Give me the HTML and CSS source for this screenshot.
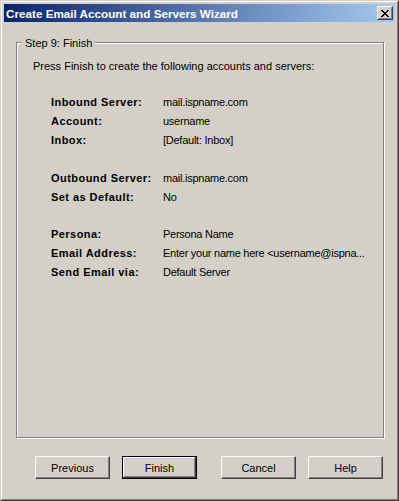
FILE: index.html
```html
<!DOCTYPE html>
<html lang="en">
<head>
    <meta charset="UTF-8">
    <title>Create Email Account and Servers Wizard</title>
    <link rel="stylesheet" href="styles.css">
</head>
<body>
    <div class="window">
        <div class="frame">
            <div class="titlebar">
                <span class="title">Create Email Account and Servers Wizard</span>
                <button type="button" class="close-btn" aria-label="Close">
                    <svg width="8" height="7" viewBox="0 0 8 7" shape-rendering="crispEdges">
                        <path fill="#000" d="M0 0h2v1h-2z M6 0h2v1h-2z M1 1h2v1h-2z M5 1h2v1h-2z M2 2h4v1h-4z M3 3h2v1h-2z M2 4h4v1h-4z M1 5h2v1h-2z M5 5h2v1h-2z M0 6h2v1h-2z M6 6h2v1h-2z"/>
                    </svg>
                </button>
            </div>
            <div class="content">
                <fieldset class="group">
                    <legend>Step 9: Finish</legend>
                    <p class="intro">Press Finish to create the following accounts and servers:</p>
                    <div class="summary">
                        <dl class="section">
                            <div class="row"><dt>Inbound Server:</dt><dd>mail.ispname.com</dd></div>
                            <div class="row"><dt>Account:</dt><dd>username</dd></div>
                            <div class="row"><dt>Inbox:</dt><dd>[Default: Inbox]</dd></div>
                        </dl>
                        <dl class="section">
                            <div class="row"><dt>Outbound Server:</dt><dd>mail.ispname.com</dd></div>
                            <div class="row"><dt>Set as Default:</dt><dd>No</dd></div>
                        </dl>
                        <dl class="section">
                            <div class="row"><dt>Persona:</dt><dd>Persona Name</dd></div>
                            <div class="row"><dt>Email Address:</dt><dd>Enter your name here &lt;username@ispna...</dd></div>
                            <div class="row"><dt>Send Email via:</dt><dd>Default Server</dd></div>
                        </dl>
                    </div>
                </fieldset>
                <div class="buttons">
                    <button type="button" class="btn">Previous</button>
                    <button type="button" class="btn btn-default">Finish</button>
                    <button type="button" class="btn btn-wide-gap">Cancel</button>
                    <button type="button" class="btn">Help</button>
                </div>
            </div>
        </div>
    </div>
</body>
</html>
```

FILE: styles.css
```css
body {
    margin: 0;
    font-family: "Liberation Sans", Arial, sans-serif;
    font-size: 11px;
    color: #000;
    background: #d4d0c8;
}
.window {
    width: 399px;
    height: 501px;
    box-sizing: border-box;
    border: 1px solid;
    border-color: #d4d0c8 #404040 #404040 #d4d0c8;
}
.frame {
    height: 100%;
    box-sizing: border-box;
    border: 1px solid;
    border-color: #fff #808080 #808080 #fff;
    padding: 2px;
    display: flex;
    flex-direction: column;
}
.titlebar {
    height: 18px;
    padding: 0 2px;
    display: flex;
    align-items: center;
    background: linear-gradient(to right, #0a246a, #a6caf0);
}
.title {
    flex: 1;
    color: #fff;
    font-weight: bold;
    font-size: 11.7px;
    line-height: 13px;
}
.close-btn {
    width: 16px;
    height: 14px;
    padding: 0;
    margin: 0;
    box-sizing: border-box;
    display: flex;
    align-items: center;
    justify-content: center;
    background: #d4d0c8;
    border: 1px solid;
    border-color: #fff #404040 #404040 #fff;
    box-shadow: inset -1px -1px #808080;
}
.content {
    flex: 1;
    display: flex;
    flex-direction: column;
    padding: 0 11px 0 12px;
}
.group {
    flex: 1;
    margin: 13px 0 0;
    padding: 7px 0 0;
    min-width: 0;
    border: 1px solid #808080;
    box-shadow: inset 1px 1px #fff, 1px 1px #fff;
}
.group legend {
    margin-left: 5px;
    padding: 2px 3px 0;
    line-height: 13px;
    background: #d4d0c8;
}
.intro {
    margin: 0 0 17px 16px;
    line-height: 19px;
}
.summary {
    margin-left: 34px;
}
.section {
    margin: 0 0 19px;
}
.section + .section {
    margin-bottom: 18px;
}
.row {
    display: flex;
    line-height: 19px;
}
.row dt {
    width: 112px;
    font-weight: bold;
    letter-spacing: 0.45px;
}
.row dd {
    margin: 0;
    white-space: nowrap;
    letter-spacing: -0.25px;
}
.buttons {
    display: flex;
    gap: 12px;
    margin: 18px 0 18px;
    padding-left: 19px;
}
.btn {
    width: 75px;
    height: 23px;
    padding: 0;
    box-sizing: border-box;
    font-family: "Liberation Sans", Arial, sans-serif;
    font-size: 11px;
    color: #000;
    background: #d4d0c8;
    border: 1px solid;
    border-color: #fff #404040 #404040 #fff;
    box-shadow: inset -1px -1px #808080;
}
.btn-default {
    border: 1px solid #000;
    box-shadow: inset -1px -1px #404040, inset 1px 1px #fff, inset -2px -2px #808080;
}
.btn-wide-gap {
    margin-left: 12px;
}
```
